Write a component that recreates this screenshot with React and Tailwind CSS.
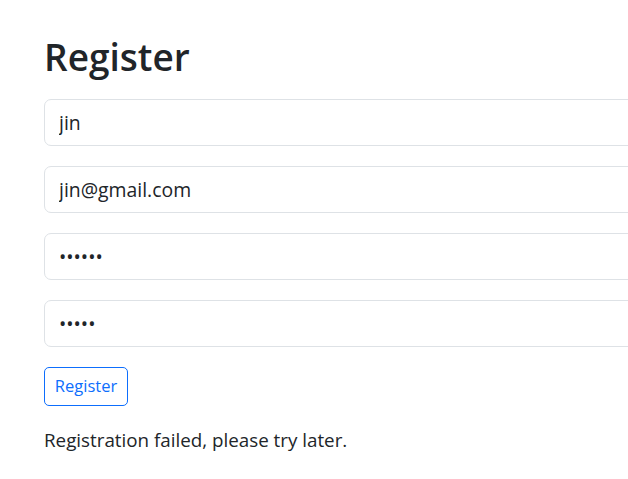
import React, { useState } from 'react';

export default function App() {
  const [form, setForm] = useState({ name: 'jin', email: 'jin@gmail.com', password: '123456', confirm: '12345' });
  const [message] = useState('Registration failed, please try later.');

  const inputClass =
    'block w-[760px] h-[47px] mb-[20px] px-[14px] border border-[#dee2e6] rounded-[7px] bg-white text-[19.4px] text-[#212529] outline-none';

  return (
    <div className="w-[628px] h-[479px] overflow-hidden bg-white text-[#212529]" style={{ fontFamily: '"Open Sans", "Noto Sans", sans-serif' }}>
      <div className="pl-[44px] pt-[35px]">
        <h1 className="text-[37px] font-semibold leading-[1.2] mb-[15px] h-[49px]">Register</h1>
        <form onSubmit={e => e.preventDefault()}>
          <input
            type="text"
            value={form.name}
            onChange={e => setForm({ ...form, name: e.target.value })}
            className={inputClass}
          />
          <input
            type="email"
            value={form.email}
            onChange={e => setForm({ ...form, email: e.target.value })}
            className={inputClass}
          />
          <input
            type="password"
            value={form.password}
            onChange={e => setForm({ ...form, password: e.target.value })}
            className={inputClass}
          />
          <input
            type="password"
            value={form.confirm}
            onChange={e => setForm({ ...form, confirm: e.target.value })}
            className={inputClass}
          />
          <button
            type="submit"
            className="h-[39px] w-[84px] border border-[#0d6efd] rounded-[5px] text-[#0d6efd] text-[16.5px] bg-white"
          >
            Register
          </button>
        </form>
        <p className="mt-[20px] text-[18.8px] leading-[1.5]">{message}</p>
      </div>
    </div>
  );
}
